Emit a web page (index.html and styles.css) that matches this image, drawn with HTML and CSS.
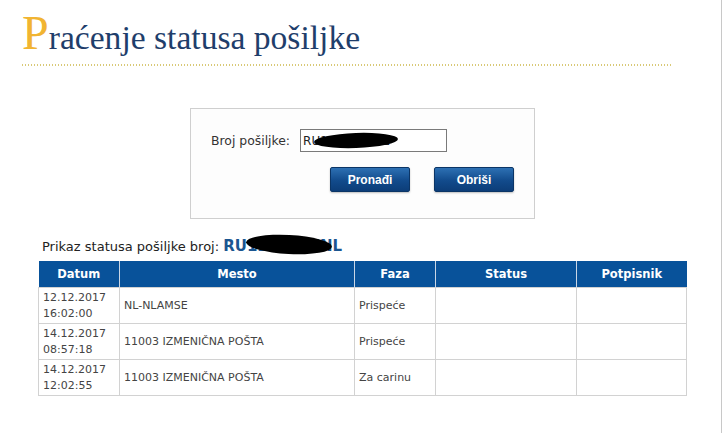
FILE: index.html
```html
<!DOCTYPE html>
<html lang="sr">
<head>
  <meta charset="UTF-8" />
  <meta name="viewport" content="width=device-width, initial-scale=1.0"/>
  <title>Praćenje statusa pošiljke</title>
  <link rel="stylesheet" href="styles.css">
</head>
<body>
  <div class="page">
    <header class="title-bar">
      <h1><span class="initial">P</span>raćenje statusa pošiljke</h1>
      <div class="dots"></div>
    </header>

    <form class="search-box">
      <div class="field-row">
        <label for="broj">Broj pošiljke:</label>
        <span class="input-wrap">
          <input id="broj" type="text" value="RU1234567NL">
          <span class="redact redact-input"></span>
        </span>
      </div>
      <div class="button-row">
        <button type="button" class="btn">Pronađi</button>
        <button type="button" class="btn">Obriši</button>
      </div>
    </form>

    <p class="result-caption">
      Prikaz statusa pošiljke broj:
      <span class="tracking">RU1234567NL<span class="redact redact-caption"></span></span>
    </p>

    <table class="status-table">
      <colgroup>
        <col class="c-date"><col class="c-place"><col class="c-phase"><col class="c-status"><col class="c-sign">
      </colgroup>
      <thead>
        <tr>
          <th>Datum</th>
          <th>Mesto</th>
          <th>Faza</th>
          <th>Status</th>
          <th>Potpisnik</th>
        </tr>
      </thead>
      <tbody>
        <tr>
          <td>12.12.2017<br>16:02:00</td>
          <td>NL-NLAMSE</td>
          <td>Prispeće</td>
          <td></td>
          <td></td>
        </tr>
        <tr>
          <td>14.12.2017<br>08:57:18</td>
          <td>11003 IZMENIČNA POŠTA</td>
          <td>Prispeće</td>
          <td></td>
          <td></td>
        </tr>
        <tr>
          <td>14.12.2017<br>12:02:55</td>
          <td>11003 IZMENIČNA POŠTA</td>
          <td>Za carinu</td>
          <td></td>
          <td></td>
        </tr>
      </tbody>
    </table>
  </div>
</body>
</html>
```

FILE: styles.css
```css
:root {
  --title-blue: #1f3e6b;
  --gold: #f1b432;
  --table-blue: #08529a;
  --cell-border: #d2d2d2;
  --text: #444;
}

body {
  margin: 0;
  background: #fff;
  font-family: "DejaVu Sans", Verdana, sans-serif;
  color: var(--text);
}

.page {
  width: 721px;
  height: 433px;
  border-right: 1px solid #c8c8c8;
  overflow: hidden;
}

.title-bar {
  padding: 9px 0 0 22px;
}

h1 {
  margin: 0;
  font-family: "Liberation Serif", "Times New Roman", serif;
  font-weight: normal;
  font-size: 33.6px;
  line-height: 48px;
  color: var(--title-blue);
}

.initial {
  font-size: 48px;
  color: var(--gold);
}

.dots {
  width: 650px;
  height: 2px;
  margin-top: 2px;
  background: repeating-linear-gradient(90deg, #d9c978 0 1.5px, transparent 1.5px 3px);
}

.search-box {
  width: 303px;
  margin: 42px 0 0 190px;
  padding: 20px 20px 26px;
  border: 1px solid #cfcfcf;
  background: #fdfdfd;
  font-size: 12px;
  color: #333;
}

.field-row {
  display: flex;
  align-items: center;
  gap: 10px;
}

.field-row label {
  font-size: 12.4px;
}

.input-wrap {
  position: relative;
  display: inline-block;
}

.input-wrap input {
  width: 141px;
  height: 19px;
  padding: 1px 2px;
  border: 1px solid #7a7a7a;
  font-family: "DejaVu Sans", Verdana, sans-serif;
  font-size: 12px;
  color: #222;
  outline: none;
}

.button-row {
  display: flex;
  justify-content: flex-end;
  gap: 24px;
  margin-top: 15px;
}

.btn {
  width: 80px;
  height: 25px;
  border: 1px solid #0b3566;
  border-radius: 2px;
  background: linear-gradient(#2d70b3, #124b8c 55%, #0c3d78);
  box-shadow: 0 1px 2px rgba(0, 0, 0, 0.25);
  color: #fff;
  font-family: "Liberation Sans", Arial, sans-serif;
  font-weight: bold;
  font-size: 12px;
  cursor: pointer;
}

.redact {
  position: absolute;
  background: #000;
  border-radius: 50%;
}

.redact-input {
  left: 14px;
  top: 4px;
  width: 84px;
  height: 15px;
  transform: rotate(-2deg);
}

.result-caption {
  margin: 18px 0 0 42px;
  font-size: 13px;
  color: #222;
}

.tracking {
  position: relative;
  font-weight: bold;
  font-size: 15px;
  color: #1a5590;
}

.redact-caption {
  left: 23px;
  top: -2px;
  width: 86px;
  height: 19px;
  transform: rotate(3deg);
}

.status-table {
  width: 648px;
  margin: 6px 0 0 38px;
  border-collapse: collapse;
  table-layout: fixed;
  font-size: 11px;
}

.c-date { width: 81px; }
.c-place { width: 235px; }
.c-phase { width: 81px; }
.c-status { width: 141px; }
.c-sign { width: 110px; }

.status-table th {
  height: 26px;
  padding: 0;
  background: var(--table-blue);
  border-right: 1px solid #c9d6e6;
  color: #fff;
  font-size: 11.5px;
  font-weight: bold;
  text-align: center;
}

.status-table th:last-child {
  border-right: none;
}

.status-table td {
  height: 35px;
  padding: 0 4px;
  border: 1px solid var(--cell-border);
  line-height: 16px;
  vertical-align: middle;
  color: var(--text);
}
```
